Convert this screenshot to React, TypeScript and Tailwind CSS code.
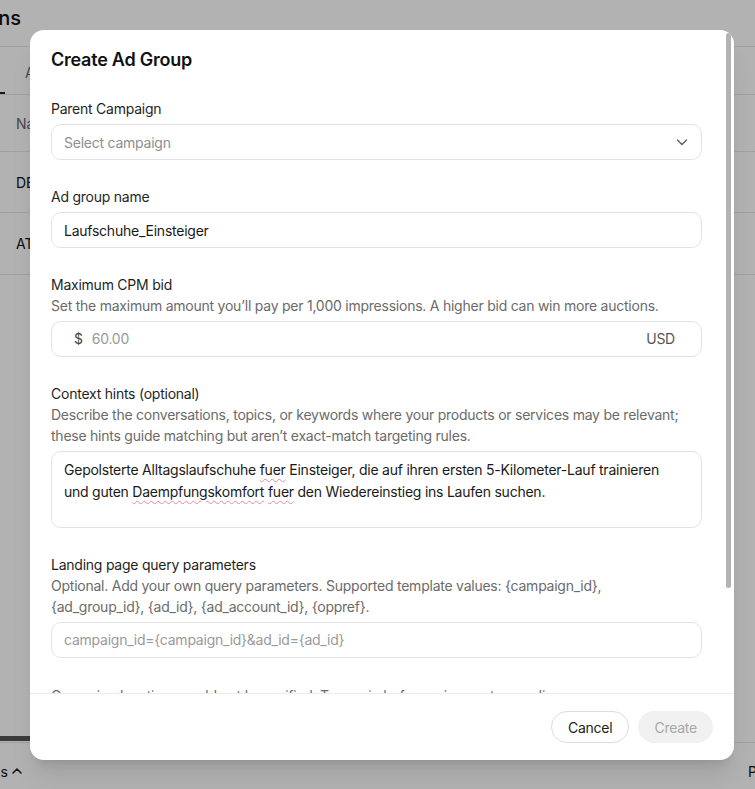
import React from 'react';

const font = { fontFamily: 'Inter, "Noto Sans", sans-serif' };

const ChevronDown = () => (
  <svg width="14" height="14" viewBox="0 0 14 14" fill="none" stroke="currentColor" strokeWidth="1.5" strokeLinecap="round" strokeLinejoin="round">
    <path d="M2.5 5 7 9.5 11.5 5" />
  </svg>
);

const ChevronUp = () => (
  <svg width="12" height="12" viewBox="0 0 12 12" fill="none" stroke="currentColor" strokeWidth="1.6" strokeLinecap="round" strokeLinejoin="round">
    <path d="M2 8 6 4l4 4" />
  </svg>
);

type FieldProps = {
  label: string;
  description?: React.ReactNode;
  children: React.ReactNode;
};

const Field = ({ label, description, children }: FieldProps) => (
  <div className="flex flex-col">
    <div className="text-[14px] leading-5 text-[#1f1f1f]">{label}</div>
    {description && <div className="text-[14px] leading-[21.5px] text-[#6b6b6b] whitespace-nowrap">{description}</div>}
    <div className={description ? 'mt-1' : 'mt-[5px]'}>{children}</div>
  </div>
);

const Misspelled = ({ children }: { children: React.ReactNode }) => (
  <span className="underline decoration-wavy decoration-[#e48aa3] decoration-1 underline-offset-[3px]">{children}</span>
);

const inputBox = 'h-9 w-full rounded-[10px] border border-[#e3e3e3] bg-white flex items-center text-[14px]';

const BackgroundPage = () => (
  <div className="flex h-full flex-col bg-white text-[#111]">
    <div className="h-[47px] border-b border-[#e6e6e6] pt-1">
      <div className="flex w-[21px] justify-end overflow-hidden">
        <span className="shrink-0 text-[20px] leading-[28px] font-medium">Campaigns</span>
      </div>
    </div>
    <div className="flex h-[48px] border-b border-[#e6e6e6]">
      <div className="w-[5px] border-b-2 border-[#222]" />
      <div className="pl-5 pt-[16px] text-[14px] leading-5 text-[#666]">Ad groups</div>
    </div>
    <div className="flex h-[57px] items-center border-b border-[#e6e6e6] pl-4 text-[14px] text-[#666]">Name</div>
    <div className="flex h-[61px] items-center border-b border-[#e6e6e6] pl-4 text-[14px]">DE_Laufschuhe</div>
    <div className="flex h-[62px] items-center border-b border-[#e6e6e6] pl-4 text-[14px]">AT_Laufschuhe</div>
    <div className="flex-1" />
    <div className="h-[6px]">
      <div className="h-[5px] w-[30px] bg-[#555]" />
    </div>
    <div className="flex h-[47px] items-center overflow-hidden border-t border-[#e6e6e6] pb-1 pt-[14px] text-[14px]">
      <div className="flex w-[748px] shrink-0 items-center">
        <div className="flex w-[8px] justify-end overflow-hidden">
          <span className="shrink-0">Columns</span>
        </div>
        <span className="ml-[3px] text-[#222]">
          <ChevronUp />
        </span>
      </div>
      <span className="shrink-0">Previous</span>
    </div>
  </div>
);

const CreateAdGroupDialog = () => (
  <div className="absolute left-[30px] top-[30px] flex h-[730px] w-[704px] flex-col overflow-hidden rounded-[14px] bg-white tracking-[-0.015em] shadow-xl">
    <div className="relative h-[663px] overflow-hidden">
      <div className="pl-[21px] pr-[32px] pt-4">
        <h2 className="text-[18px] leading-7 font-semibold text-[#111]">Create Ad Group</h2>
        <div className="mt-[25px] flex flex-col gap-[27px]">
          <Field label="Parent Campaign">
            <div className={`${inputBox} justify-between pl-3 pr-[12px] text-[#8f8f8f]`}>
              <span>Select campaign</span>
              <span className="text-[#666]">
                <ChevronDown />
              </span>
            </div>
          </Field>
          <Field label="Ad group name">
            <div className={`${inputBox} px-3 text-[#1a1a1a]`}>Laufschuhe_Einsteiger</div>
          </Field>
          <Field
            label="Maximum CPM bid"
            description="Set the maximum amount you’ll pay per 1,000 impressions. A higher bid can win more auctions."
          >
            <div className={`${inputBox} pl-[22px] pr-[26px]`}>
              <span className="text-[#444]">$</span>
              <span className="ml-[9px] text-[#9a9a9a]">60.00</span>
              <span className="ml-auto text-[#555]">USD</span>
            </div>
          </Field>
          <Field
            label="Context hints (optional)"
            description={
              <>
                Describe the conversations, topics, or keywords where your products or services may be relevant;
                <br />
                these hints guide matching but aren’t exact-match targeting rules.
              </>
            }
          >
            <div className="h-[77px] w-full rounded-[10px] border border-[#e3e3e3] px-3 pt-[7px] text-[14px] leading-[22px] text-[#1a1a1a] whitespace-nowrap">
              Gepolsterte Alltagslaufschuhe <Misspelled>fuer</Misspelled> Einsteiger, die auf ihren ersten 5-Kilometer-Lauf trainieren
              <br />
              und guten <Misspelled>Daempfungskomfort</Misspelled> <Misspelled>fuer</Misspelled> den Wiedereinstieg ins Laufen suchen.
            </div>
          </Field>
          <Field
            label="Landing page query parameters"
            description={
              <>
                Optional. Add your own query parameters. Supported template values: {'{campaign_id}'},
                <br />
                {'{ad_group_id}, {ad_id}, {ad_account_id}, {oppref}.'}
              </>
            }
          >
            <div className={`${inputBox} px-3 text-[#9a9a9a]`}>{'campaign_id={campaign_id}&ad_id={ad_id}'}</div>
          </Field>
          <div className="text-[14px] leading-[22px] text-[#6b6b6b]">
            Campaign locations could not be verified. Try again before using custom audiences.
          </div>
        </div>
      </div>
      <div className="absolute right-[3px] top-[3px] h-[555px] w-[5px] rounded-full bg-[#b3b3b3]" />
    </div>
    <div className="flex h-[67px] items-center justify-end gap-[9px] border-t border-[#ececec] pr-[21px]">
      <button className="h-8 rounded-full border border-[#dcdcdc] bg-white px-4 text-[14px] text-[#222]">Cancel</button>
      <button className="h-8 rounded-full bg-[#f1f1f1] px-4 text-[14px] text-[#a8a8a8]">Create</button>
    </div>
  </div>
);

export default function App() {
  return (
    <div className="relative h-[789px] w-[755px] overflow-hidden" style={font}>
      <BackgroundPage />
      <div className="absolute inset-0 bg-black/30" />
      <CreateAdGroupDialog />
    </div>
  );
}
